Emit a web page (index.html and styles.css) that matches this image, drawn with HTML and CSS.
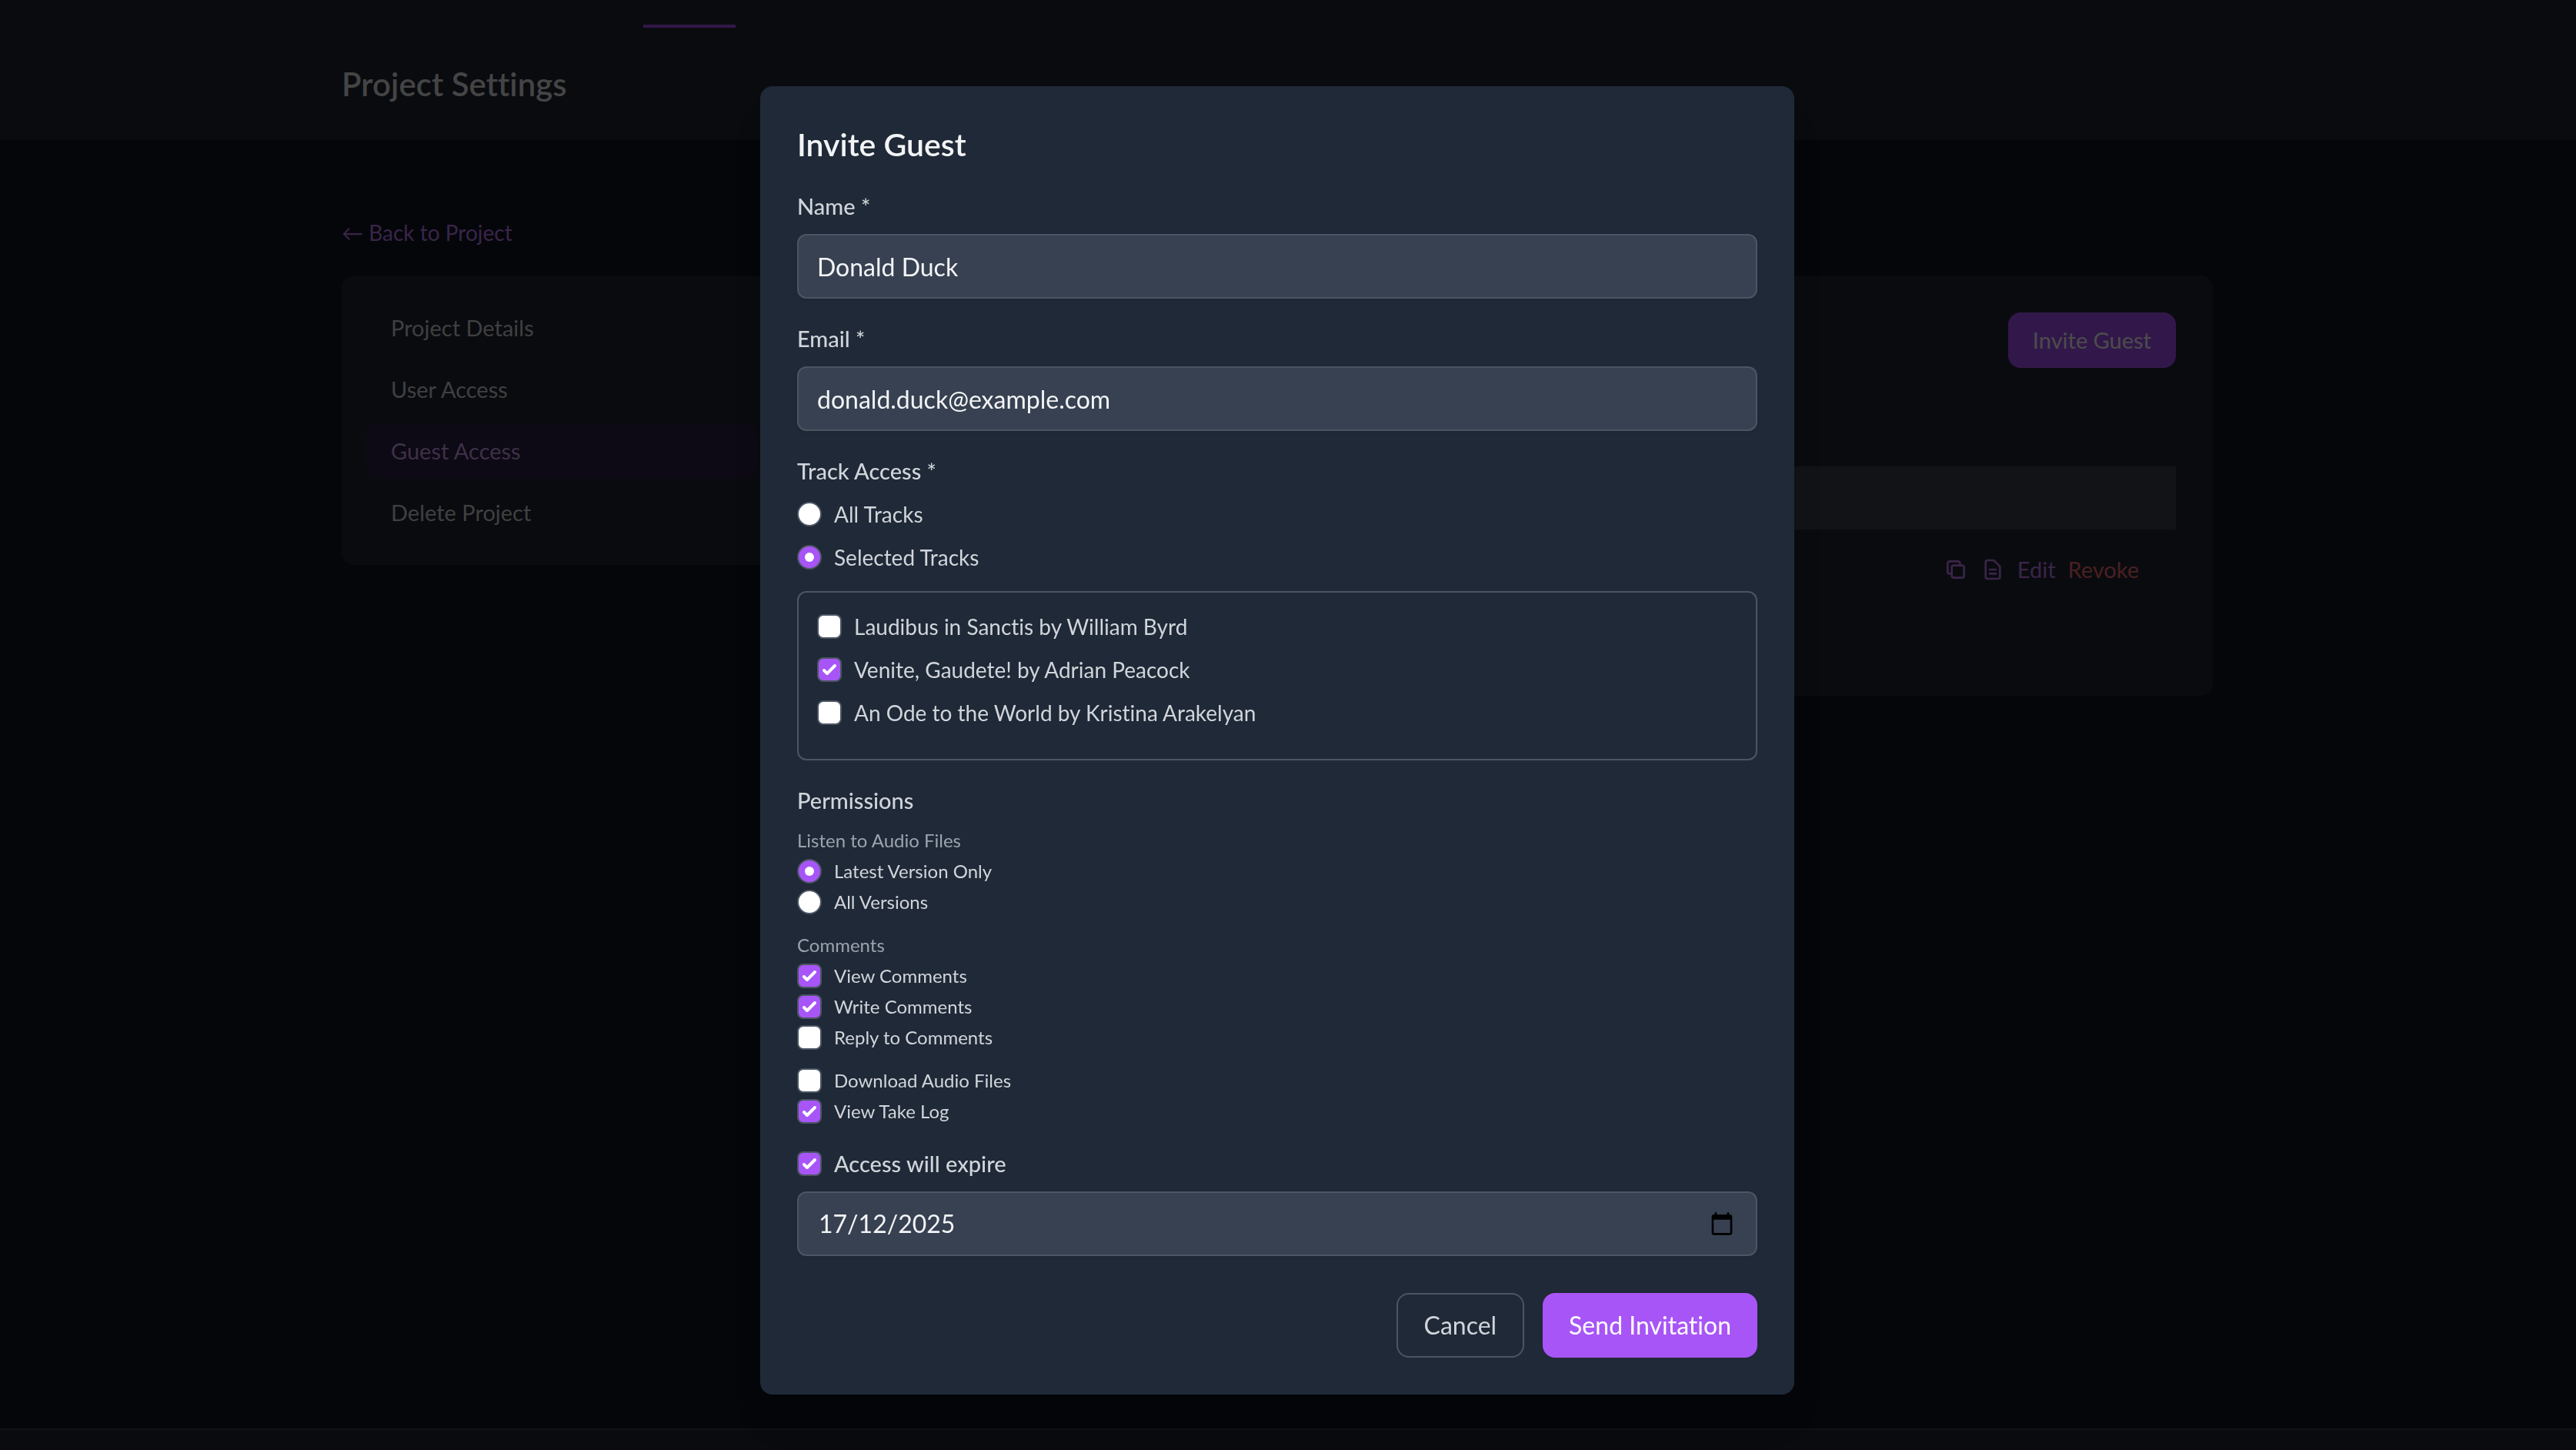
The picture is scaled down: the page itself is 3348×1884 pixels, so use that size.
FILE: index.html
```html
<!DOCTYPE html>
<html lang="en">
<head>
<meta charset="utf-8">
<title>Project Settings</title>
<meta name="viewport" content="width=device-width, initial-scale=1">
<link rel="stylesheet" href="styles.css">
</head>
<body>
<div class="page">
  <nav class="navbar" aria-label="Main">
    <div class="container navbar-inner"><span class="nav-marker"></span></div>
  </nav>
  <header class="page-header">
    <div class="container"><h1>Project Settings</h1></div>
  </header>
  <main class="container main">
    <a class="back-link" href="#">← Back to Project</a>
    <div class="settings">
      <nav class="card side-menu" aria-label="Settings">
        <a href="#">Project Details</a>
        <a href="#">User Access</a>
        <a href="#" class="active">Guest Access</a>
        <a href="#">Delete Project</a>
      </nav>
      <section class="card guests">
        <div class="guests-head">
          <button type="button" class="btn btn-small">Invite Guest</button>
        </div>
        <table class="guest-table">
          <thead><tr><th></th></tr></thead>
          <tbody>
            <tr>
              <td>
                <div class="actions">
                  <button type="button" class="icon-btn" aria-label="Copy link">
                    <svg viewBox="0 0 24 24"><path d="M8 16H6a2 2 0 01-2-2V6a2 2 0 012-2h8a2 2 0 012 2v2m-6 12h8a2 2 0 002-2v-8a2 2 0 00-2-2h-8a2 2 0 00-2 2v8a2 2 0 002 2z"/></svg>
                  </button>
                  <button type="button" class="icon-btn" aria-label="View log">
                    <svg viewBox="0 0 24 24"><path d="M9 12h6m-6 4h6m2 5H7a2 2 0 01-2-2V5a2 2 0 012-2h5.586a1 1 0 01.707.293l5.414 5.414a1 1 0 01.293.707V19a2 2 0 01-2 2z"/></svg>
                  </button>
                  <a href="#" class="edit">Edit</a>
                  <a href="#" class="revoke">Revoke</a>
                </div>
              </td>
            </tr>
          </tbody>
        </table>
      </section>
    </div>
  </main>
  <footer class="footer"></footer>
</div>

<div class="overlay">
  <form class="modal" role="dialog" aria-modal="true" aria-labelledby="modal-title">
    <h2 id="modal-title">Invite Guest</h2>

    <div class="field">
      <label for="name">Name *</label>
      <input class="text-input" id="name" type="text" value="Donald Duck">
    </div>

    <div class="field">
      <label for="email">Email *</label>
      <input class="text-input" id="email" type="email" value="donald.duck@example.com">
    </div>

    <fieldset>
      <legend>Track Access *</legend>
      <div class="options">
        <label class="option"><input type="radio" name="access"> All Tracks</label>
        <label class="option"><input type="radio" name="access" checked> Selected Tracks</label>
      </div>
      <div class="track-list">
        <label class="option"><input type="checkbox"> Laudibus in Sanctis by William Byrd</label>
        <label class="option"><input type="checkbox" checked> Venite, Gaudete! by Adrian Peacock</label>
        <label class="option"><input type="checkbox"> An Ode to the World by Kristina Arakelyan</label>
      </div>
    </fieldset>

    <fieldset>
      <legend>Permissions</legend>
      <div class="permissions">
        <div class="group">
          <span class="group-title">Listen to Audio Files</span>
          <label class="option small"><input type="radio" name="versions" checked> Latest Version Only</label>
          <label class="option small"><input type="radio" name="versions"> All Versions</label>
        </div>
        <div class="group">
          <span class="group-title">Comments</span>
          <label class="option small"><input type="checkbox" checked> View Comments</label>
          <label class="option small"><input type="checkbox" checked> Write Comments</label>
          <label class="option small"><input type="checkbox"> Reply to Comments</label>
        </div>
        <div class="group">
          <label class="option small"><input type="checkbox"> Download Audio Files</label>
          <label class="option small"><input type="checkbox" checked> View Take Log</label>
        </div>
      </div>
    </fieldset>

    <div class="field">
      <label class="option"><input type="checkbox" checked> Access will expire</label>
      <div class="text-input date-input">
        <input type="text" value="17/12/2025" aria-label="Expiry date">
        <button type="button" aria-label="Open calendar">
          <svg viewBox="0 0 24 24"><path d="M20 3h-1V1h-2v2H7V1H5v2H4c-1.100 0-2 .9-2 2v16c0 1.100.9 2 2 2h16c1.100 0 2-.9 2-2V5c0-1.100-.9-2-2-2zm0 18H4V8h16v13z"/></svg>
        </button>
      </div>
    </div>

    <div class="buttons">
      <button type="button" class="btn btn-outline">Cancel</button>
      <button type="submit" class="btn">Send Invitation</button>
    </div>
  </form>
</div>
</body>
</html>
```
FILE: styles.css
```css
:root {
  --font: Lato, "Open Sans", sans-serif;
  --text: #d1d5db;
  --muted: #9ca3af;
  --line: #4b5563;
  --accent: #a855f7;
  --scrollbar: 28px;
}

*, *::before, *::after { box-sizing: border-box; }

body {
  margin: 0;
  background: #05060a;
  color: var(--text);
  font: 28px/40px var(--font);
  font-variant-ligatures: none;
}

h1, h2, fieldset, legend { margin: 0; padding: 0; border: 0; }
a { text-decoration: none; color: inherit; }
button, input { font: inherit; font-variant-ligatures: none; color: inherit; }

/* Page behind the dialog, in its dimmed colours */
.page {
  display: flex;
  flex-direction: column;
  min-height: 100vh;
}

.container {
  width: 100%;
  max-width: 2560px;
  margin: 0 auto;
  padding: 0 64px;
}

.navbar, .page-header { padding-right: var(--scrollbar); background: #0a0b0f; }

.navbar { height: 36px; border-bottom: 1px solid #090a0e; }
.navbar-inner { display: flex; align-items: flex-end; height: 36px; }
.nav-marker { width: 120px; height: 4px; margin-left: 392px; background: #32184a; }

.page-header { padding-top: 48px; padding-bottom: 48px; }
h1 { font-size: 42px; line-height: 50px; font-weight: 600; color: #444445; }

.main {
  flex: 1;
  max-width: 2588px;
  padding: 96px 92px 96px 64px;
}

.back-link {
  display: block;
  margin-bottom: 32px;
  line-height: 48px;
  color: #3a2549;
}

.settings {
  display: grid;
  grid-template-columns: repeat(4, minmax(0, 1fr));
  gap: 48px;
  align-items: start;
}

.card { background: #0a0b0f; border-radius: 16px; }

.side-menu {
  display: flex;
  flex-direction: column;
  gap: 8px;
  padding: 32px;
  color: #3f4041;
  font-size: 29px;
}
.side-menu a { padding: 16px 32px; border-radius: 16px; }
.side-menu .active { background: #0d0a15; color: #3f3048; }

.guests { grid-column: span 3; padding: 48px 48px 112px; }
.guests-head { display: flex; justify-content: flex-end; margin-bottom: 128px; }

.guest-table { width: 100%; border-collapse: collapse; }
.guest-table th { height: 82px; padding: 0; background: #121317; }
.guest-table td { padding: 32px 48px; }

.actions { display: flex; justify-content: flex-end; align-items: center; gap: 16px; }
.icon-btn { display: flex; padding: 0; border: 0; background: none; color: #3a2549; }
.icon-btn svg {
  width: 32px;
  height: 32px;
  fill: none;
  stroke: currentColor;
  stroke-width: 2;
  stroke-linecap: round;
  stroke-linejoin: round;
}
.actions a { font-size: 29px; }
.edit { color: #3a2549; }
.revoke { color: #4a2022; }

.footer { height: 28px; background: #0a0b0f; border-top: 2px solid #111216; }

/* Dialog */
.overlay {
  position: fixed;
  inset: 0;
  display: flex;
  align-items: flex-start;
  justify-content: center;
  padding: 112px var(--scrollbar) 72px 0;
  overflow: hidden;
}

.modal {
  display: flex;
  flex-direction: column;
  gap: 32px;
  width: 100%;
  max-width: 1344px;
  padding: 48px;
  border-radius: 16px;
  background: #1f2937;
  box-shadow: 0 40px 50px -10px rgba(0, 0, 0, .1), 0 16px 20px -12px rgba(0, 0, 0, .1);
}

h2 { font-size: 41px; line-height: 56px; font-weight: 600; color: #f3f4f6; }

.field { display: flex; flex-direction: column; gap: 16px; }
.field > label, legend { font-size: 29px; font-weight: 500; }
legend { margin-bottom: 16px; }

.text-input {
  width: 100%;
  height: 84px;
  padding: 16px 24px;
  border: 2px solid var(--line);
  border-radius: 12px;
  background: #374151;
  color: #f3f4f6;
  font-size: 32px;
  line-height: 48px;
  box-shadow: 0 2px 4px rgba(0, 0, 0, .05);
}

.date-input { display: flex; align-items: center; justify-content: space-between; padding-right: 28px; }
.date-input input { flex: 1; min-width: 0; padding: 0 2px; border: 0; background: none; }
.date-input button { display: flex; padding: 0; border: 0; background: none; color: #000; }
.date-input svg { width: 32px; height: 38px; fill: currentColor; }

.option { display: flex; align-items: center; gap: 16px; }
.small { font-size: 24px; line-height: 32px; }

.option input {
  appearance: none;
  flex: none;
  width: 32px;
  height: 32px;
  margin: 0;
  border: 2px solid var(--line);
  background: #fff center / 32px 32px no-repeat;
}
.option input[type="checkbox"] { border-radius: 8px; }
.option input[type="radio"] { border-radius: 50%; }
.option input:checked { background-color: var(--accent); }
.option input[type="checkbox"]:checked {
  background-image: url("data:image/svg+xml,%3Csvg viewBox='0 0 16 16' fill='white' xmlns='http://www.w3.org/2000/svg'%3E%3Cpath d='M12.207 4.793a1 1 0 010 1.414l-5 5a1 1 0 01-1.414 0l-2-2a1 1 0 011.414-1.414L6.500 9.086l4.293-4.293a1 1 0 011.414 0z'/%3E%3C/svg%3E");
}
.option input[type="radio"]:checked {
  background-image: url("data:image/svg+xml,%3Csvg viewBox='0 0 16 16' fill='white' xmlns='http://www.w3.org/2000/svg'%3E%3Ccircle cx='8' cy='8' r='3'/%3E%3C/svg%3E");
}

.options, .track-list { display: flex; flex-direction: column; gap: 16px; }
.track-list {
  margin-top: 24px;
  padding: 24px 24px 40px;
  border: 2px solid var(--line);
  border-radius: 12px;
}

.permissions { display: flex; flex-direction: column; gap: 24px; }
.group { display: flex; flex-direction: column; gap: 8px; }
.group-title { font-size: 24px; line-height: 32px; color: var(--muted); }

.buttons { display: flex; justify-content: flex-end; gap: 24px; margin-top: 16px; }

.btn {
  padding: 16px 34px;
  border: 0;
  border-radius: 16px;
  background: var(--accent);
  color: #fff;
  font-size: 32px;
  line-height: 48px;
}
.btn-outline { border: 2px solid var(--line); background: none; color: var(--text); }
.btn-small { padding: 16px 32px; background: #32184a; color: #4c4c4c; font-size: 29px; line-height: 40px; }
```
